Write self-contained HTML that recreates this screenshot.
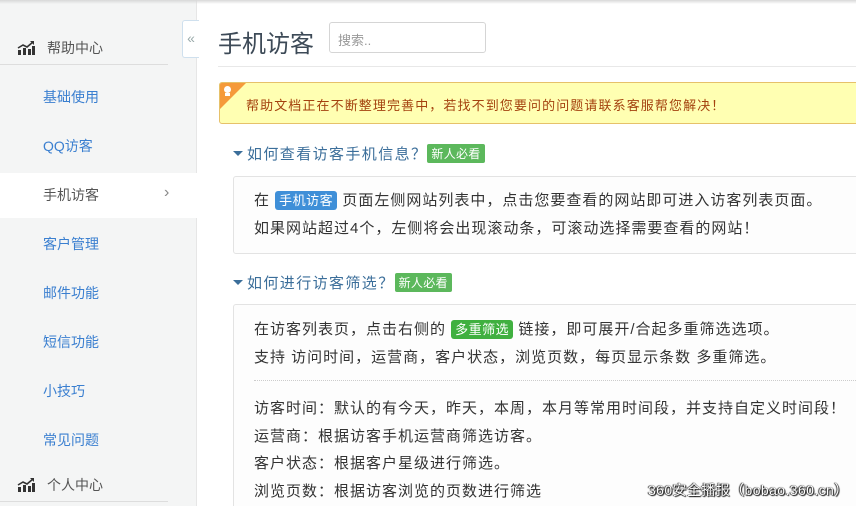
<!DOCTYPE html>
<html><head><meta charset="utf-8"><style>
*{margin:0;padding:0;box-sizing:border-box}
html,body{width:856px;height:506px;overflow:hidden}
body{background:#fff;font-family:"Liberation Sans","Noto Sans CJK SC",sans-serif;position:relative}
.side{position:absolute;left:0;top:0;width:197px;height:506px;background:#f4f5f5;border-right:1px solid #e6e6e6}
.topsh{position:absolute;left:0;top:0;width:856px;height:4px;background:linear-gradient(#d8d8d8,rgba(255,255,255,0));z-index:5}
.sec{position:absolute;left:17px;font-size:14px;color:#555;display:flex;align-items:center}
.sec span{margin-left:12px}
.line{position:absolute;left:0;width:168px;height:1px;background:#ddd}
.it{position:absolute;left:43px;font-size:14px;color:#3a7fd0;line-height:20px}
.act{position:absolute;left:0;top:173px;width:198px;height:45px;background:#fff}
.coll{position:absolute;left:182px;top:20px;width:17px;height:38px;border:1px solid #cfe0ee;border-right:none;border-radius:3px 0 0 3px;background:#fff;color:#9aa;font-size:14px;text-align:center;line-height:34px;z-index:3}
.title{position:absolute;left:218px;top:24px;font-size:24px;color:#3d4a57}
.search{position:absolute;left:329px;top:22px;width:157px;height:31px;border:1px solid #d5d5d5;border-radius:3px;font-size:13px;color:#999;padding:7px 8px}
.hr{position:absolute;left:218px;top:66px;width:638px;height:1px;background:#e8e8e8}
.alert{position:absolute;left:219px;top:82px;width:650px;height:42px;background:#ffffb2;border:1px solid #e6c16a;border-radius:3px;font-size:13px;color:#a4420e;padding:12px 0 0 26px;overflow:hidden;letter-spacing:1.1px;white-space:nowrap}
.corner{position:absolute;left:0;top:0;width:0;height:0;border-top:26px solid #f59a3a;border-right:26px solid transparent}
.bulb{position:absolute;left:4px;top:3px;width:7px;height:7px;border-radius:50%;background:#fff}
.bulb2{position:absolute;left:5px;top:10px;width:5px;height:3px;background:#fff}
.q{position:absolute;left:233px;font-size:15px;color:#3b6e9a;display:flex;align-items:center;letter-spacing:1.4px;white-space:nowrap}
.caret{width:0;height:0;border-left:5px solid transparent;border-right:5px solid transparent;border-top:5px solid #3b6e9a;margin-right:4px}
.badge{background:#5cb85c;color:#fff;font-size:12px;padding:1px 4px;border-radius:2px;margin-left:0;letter-spacing:0.3px}
.box{position:absolute;left:233px;width:640px;border:1px solid #e3e3e3;border-radius:3px;background:#fdfdfd}
.p{position:absolute;left:254px;font-size:15px;color:#333;white-space:nowrap;letter-spacing:1px}
.tag{color:#fff;font-size:13px;padding:2px 4px;border-radius:3px;letter-spacing:0.5px}
.dot{position:absolute;left:254px;top:380px;width:602px;border-top:1px dotted #ccc}
.wm{position:absolute;left:648px;top:480px;font-size:14px;color:#fff;letter-spacing:0.4px;white-space:nowrap;text-shadow:0 0 1px #000,1px 1px 1px #000,-1px 0 1px #333}
</style></head><body>
<div class="topsh"></div>
<div class="side">
 <div class="sec" style="top:38px"><svg width="18" height="14" viewBox="0 0 18 14"><path d="M1 14V9h3v5zM6 14V7h3v7zM11 14V8h3v6zM15 14V5h3v9z" fill="#333"/><path d="M1 7l5-3 4 2 6-5" stroke="#333" stroke-width="1.6" fill="none"/><path d="M13 0h4v4z" fill="#333"/></svg><span>帮助中心</span></div>
 <div class="line" style="top:64px"></div>
 <div class="it" style="top:87px">基础使用</div>
 <div class="it" style="top:136px">QQ访客</div>
 <div class="act"></div>
 <div class="it" style="top:185px;color:#555">手机访客</div>
 <div style="position:absolute;left:164px;top:184px;color:#888;font-size:16px">›</div>
 <div class="it" style="top:234px">客户管理</div>
 <div class="it" style="top:283px">邮件功能</div>
 <div class="it" style="top:332px">短信功能</div>
 <div class="it" style="top:381px">小技巧</div>
 <div class="it" style="top:430px">常见问题</div>
 <div class="sec" style="top:475px"><svg width="18" height="14" viewBox="0 0 18 14"><path d="M1 14V9h3v5zM6 14V7h3v7zM11 14V8h3v6zM15 14V5h3v9z" fill="#333"/><path d="M1 7l5-3 4 2 6-5" stroke="#333" stroke-width="1.6" fill="none"/><path d="M13 0h4v4z" fill="#333"/></svg><span>个人中心</span></div>
 <div class="line" style="top:501px"></div>
</div>
<div class="coll">«</div>
<div class="title">手机访客</div>
<div class="search">搜索..</div>
<div class="hr"></div>
<div class="alert"><div class="corner"></div><div class="bulb"></div><div class="bulb2"></div>帮助文档正在不断整理完善中，若找不到您要问的问题请联系客服帮您解决！</div>
<div class="q" style="top:143px"><span class="caret"></span>如何查看访客手机信息？<span class="badge">新人必看</span></div>
<div class="box" style="top:176px;height:78px"></div>
<div class="p" style="top:189px">在 <span class="tag" style="background:#3f8fd8">手机访客</span> 页面左侧网站列表中，点击您要查看的网站即可进入访客列表页面。</div>
<div class="p" style="top:217px">如果网站超过4个，左侧将会出现滚动条，可滚动选择需要查看的网站！</div>
<div class="q" style="top:272px"><span class="caret"></span>如何进行访客筛选？<span class="badge">新人必看</span></div>
<div class="box" style="top:304px;height:210px"></div>
<div class="p" style="top:318px">在访客列表页，点击右侧的 <span class="tag" style="background:#40b040">多重筛选</span> 链接，即可展开/合起多重筛选选项。</div>
<div class="p" style="top:346px">支持 访问时间，运营商，客户状态，浏览页数，每页显示条数 多重筛选。</div>
<div class="dot"></div>
<div class="p" style="top:397px">访客时间：默认的有今天，昨天，本周，本月等常用时间段，并支持自定义时间段！</div>
<div class="p" style="top:425px">运营商：根据访客手机运营商筛选访客。</div>
<div class="p" style="top:452px">客户状态：根据客户星级进行筛选。</div>
<div class="p" style="top:480px">浏览页数：根据访客浏览的页数进行筛选</div>
<div class="wm">360安全播报（bobao.360.cn）</div>
</body></html>
